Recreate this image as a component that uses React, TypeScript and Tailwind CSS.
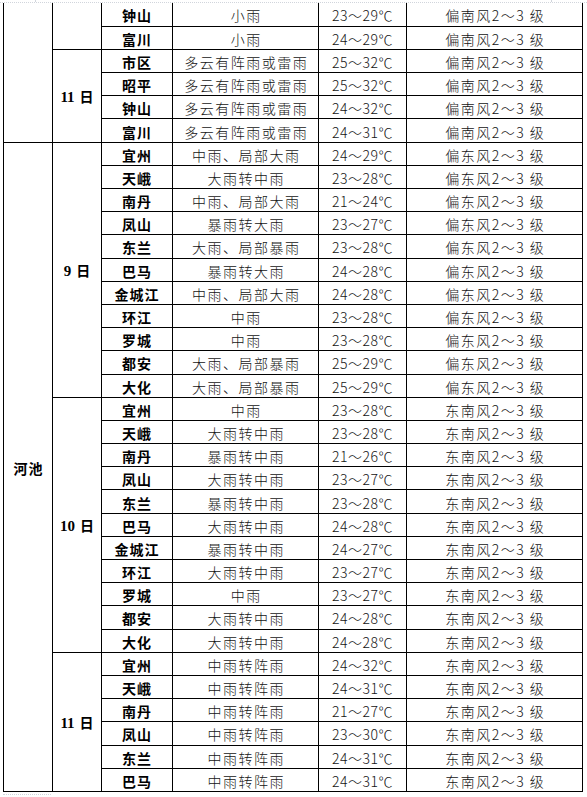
import React from 'react'

type Row = [string, string, string, string]
type DateGroup = { day: string | null; rows: Row[] }
type Region = { name: string | null; dates: DateGroup[] }

const PN = '偏南风2～3 级'
const PD = '偏东风2～3 级'
const DN = '东南风2～3 级'

const regions: Region[] = [
    {
        name: null,
        dates: [
            {
                day: null,
                rows: [
                    ['钟山', '小雨', '23～29℃', PN],
                    ['富川', '小雨', '24～29℃', PN],
                ],
            },
            {
                day: '11',
                rows: [
                    ['市区', '多云有阵雨或雷雨', '25～32℃', PN],
                    ['昭平', '多云有阵雨或雷雨', '25～32℃', PN],
                    ['钟山', '多云有阵雨或雷雨', '24～32℃', PN],
                    ['富川', '多云有阵雨或雷雨', '24～31℃', PN],
                ],
            },
        ],
    },
    {
        name: '河池',
        dates: [
            {
                day: '9',
                rows: [
                    ['宜州', '中雨、局部大雨', '24～29℃', PD],
                    ['天峨', '大雨转中雨', '23～28℃', PD],
                    ['南丹', '中雨、局部大雨', '21～24℃', PD],
                    ['凤山', '暴雨转大雨', '23～27℃', PD],
                    ['东兰', '大雨、局部暴雨', '23～28℃', PD],
                    ['巴马', '暴雨转大雨', '24～28℃', PD],
                    ['金城江', '中雨、局部大雨', '24～28℃', PD],
                    ['环江', '中雨', '23～28℃', PD],
                    ['罗城', '中雨', '23～28℃', PD],
                    ['都安', '大雨、局部暴雨', '25～29℃', PD],
                    ['大化', '大雨、局部暴雨', '25～29℃', PD],
                ],
            },
            {
                day: '10',
                rows: [
                    ['宜州', '中雨', '23～28℃', DN],
                    ['天峨', '大雨转中雨', '23～28℃', DN],
                    ['南丹', '暴雨转中雨', '21～26℃', DN],
                    ['凤山', '大雨转中雨', '23～27℃', DN],
                    ['东兰', '暴雨转中雨', '23～28℃', DN],
                    ['巴马', '大雨转中雨', '24～28℃', DN],
                    ['金城江', '暴雨转中雨', '24～27℃', DN],
                    ['环江', '大雨转中雨', '23～27℃', DN],
                    ['罗城', '中雨', '23～27℃', DN],
                    ['都安', '大雨转中雨', '24～28℃', DN],
                    ['大化', '大雨转中雨', '24～28℃', DN],
                ],
            },
            {
                day: '11',
                rows: [
                    ['宜州', '中雨转阵雨', '24～32℃', DN],
                    ['天峨', '中雨转阵雨', '24～31℃', DN],
                    ['南丹', '中雨转阵雨', '21～27℃', DN],
                    ['凤山', '中雨转阵雨', '23～30℃', DN],
                    ['东兰', '中雨转阵雨', '24～31℃', DN],
                    ['巴马', '中雨转阵雨', '24～31℃', DN],
                ],
            },
        ],
    },
]

const cell = 'border border-black px-0 pt-[2px] pb-0 text-center align-middle'
const bold = 'font-bold text-black tracking-[1px]'
const thin = 'font-light text-[#141414]'

export default function App() {
    const trs: React.ReactNode[] = []
    let first = true

    regions.forEach((region, ri) => {
        const regionSpan = region.dates.reduce((n, d) => n + d.rows.length, 0)
        region.dates.forEach((group, gi) => {
            group.rows.forEach((row, i) => {
                const top = first ? ' border-t-0' : ''
                trs.push(
                    <tr key={`${ri}-${gi}-${i}`} className="h-[23.2px]">
                        {gi === 0 && i === 0 && (
                            <td rowSpan={regionSpan} className={cell + top}>
                                {region.name && <span className={bold + ' pl-[1px]'}>{region.name}</span>}
                            </td>
                        )}
                        {i === 0 && (
                            <td rowSpan={group.rows.length} className={cell + top}>
                                {group.day && (
                                    <span className="font-bold text-black">
                                        <span className="font-['Liberation_Serif'] text-[15px]">{group.day}</span>
                                        <span className="ml-[5px]">日</span>
                                    </span>
                                )}
                            </td>
                        )}
                        <td className={cell + top}>
                            <span className={bold}>{row[0]}</span>
                        </td>
                        <td className={cell + top}>
                            <span className={thin + ' tracking-[1.5px] pl-[1.5px]'}>{row[1]}</span>
                        </td>
                        <td className={cell + top}>
                            <span className={thin + ' tracking-[0.5px]'}>{row[2]}</span>
                        </td>
                        <td className={cell + top}>
                            <span className={thin + ' tracking-[1.5px] pl-[1.5px]'}>{row[3]}</span>
                        </td>
                    </tr>
                )
                first = false
            })
        })
    })

    return (
        <div className="w-[587px] h-[797px] bg-white overflow-hidden font-['Noto_Sans_CJK_SC',sans-serif] text-[14px] leading-[20px]">
            {/* page margin marks */}
            <div className="flex h-[3px] border-b border-dotted border-gray-300">
                <div className="w-[36px] border-r border-gray-300" />
                <div className="flex-1" />
                <div className="w-[36px] border-l border-gray-300" />
            </div>
            <table className="table-fixed border-collapse ml-[3px] w-[579px]">
                <colgroup>
                    <col className="w-[49px]" />
                    <col className="w-[49px]" />
                    <col className="w-[71px]" />
                    <col className="w-[146px]" />
                    <col className="w-[88px]" />
                    <col className="w-[176px]" />
                </colgroup>
                <tbody>{trs}</tbody>
            </table>
            <div className="ml-[3px] mt-[2px] w-[48px] border-t border-dotted border-gray-300" />
        </div>
    )
}
